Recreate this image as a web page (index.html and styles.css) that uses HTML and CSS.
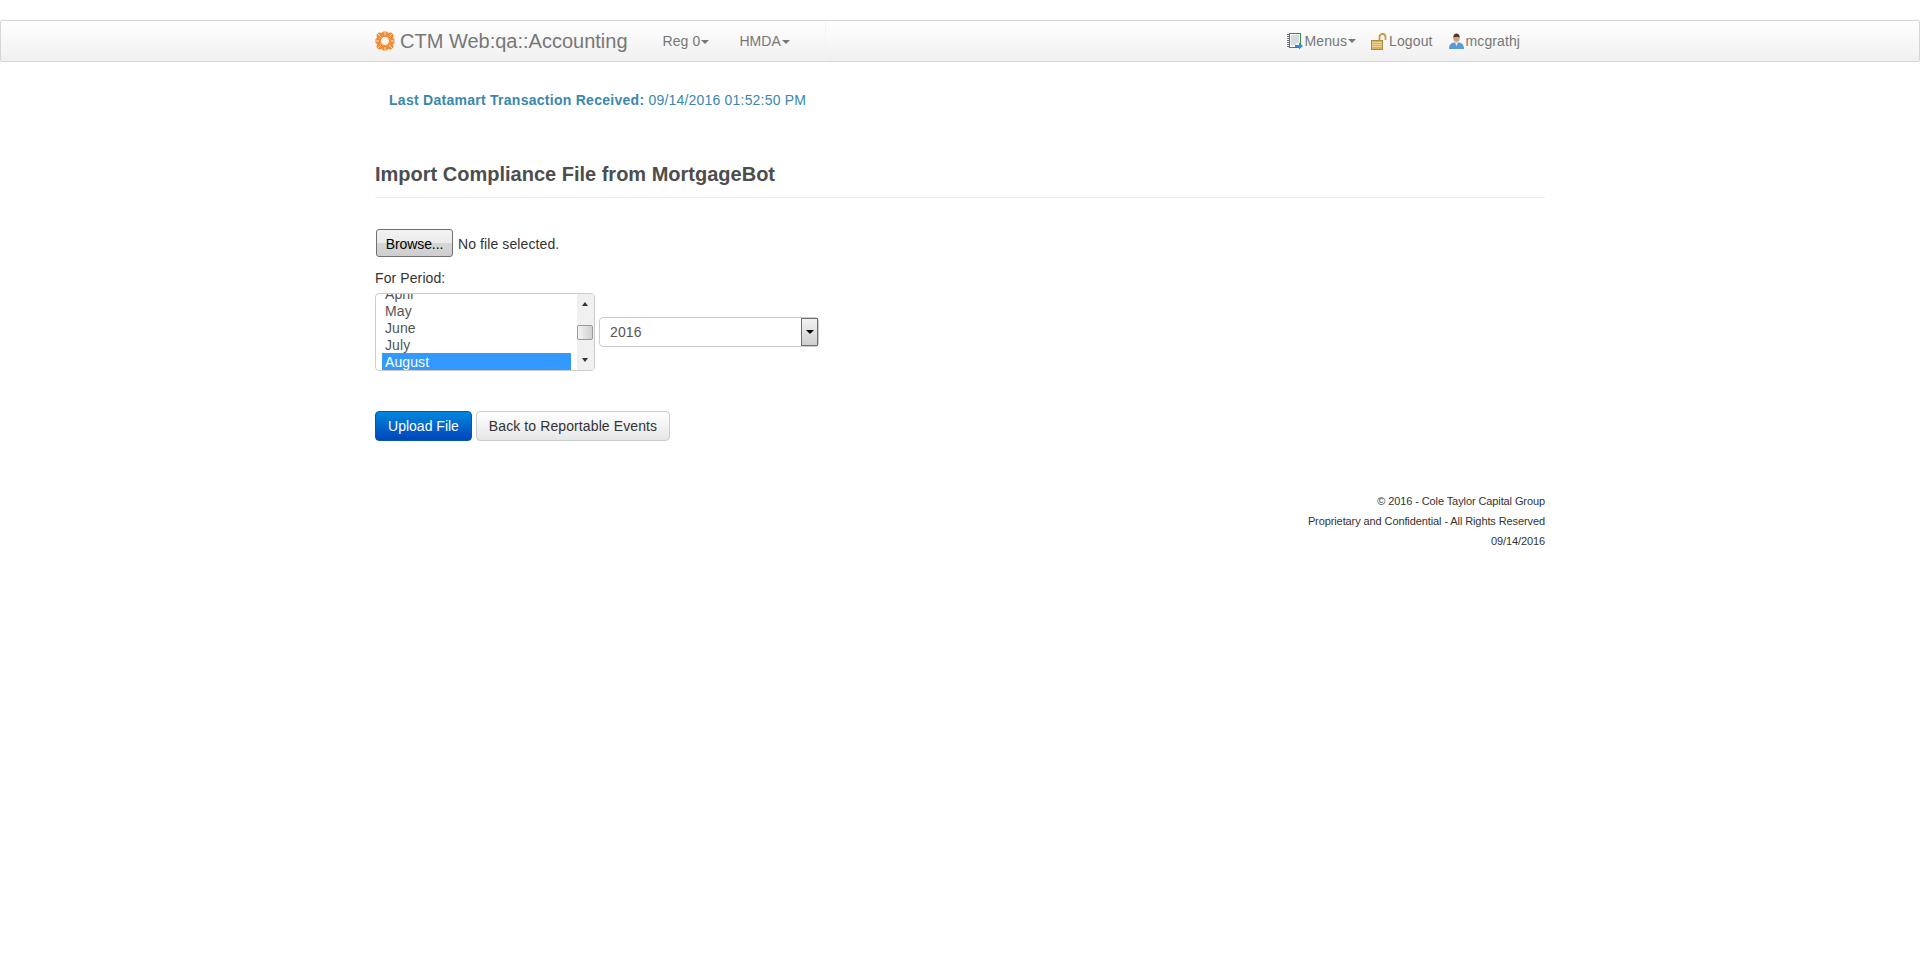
FILE: index.html
```html
<!DOCTYPE html>
<html>
  <head>
    <title>CTM Web:qa::Accounting</title>
    <link rel="stylesheet" href="styles.css">
  </head>
  <body>
    <nav class="navbar">
      <div class="nav-inner">
        <a class="brand">
          <svg class="brand-icon" width="20" height="20" viewBox="0 0 20 20">
            <g fill="#f28c38">
              <circle cx="10" cy="3.500" r="3.300"/>
              <circle cx="10" cy="16.500" r="3.300"/>
              <circle cx="3.500" cy="10" r="3.300"/>
              <circle cx="16.500" cy="10" r="3.300"/>
              <circle cx="4.800" cy="4.800" r="3.200"/>
              <circle cx="15.200" cy="4.800" r="3.200"/>
              <circle cx="4.800" cy="15.200" r="3.200"/>
              <circle cx="15.200" cy="15.200" r="3.200"/>
            </g>
            <path d="M10 5.500l4.500 4.500-4.500 4.500-4.500-4.500z" fill="#fff4e8"/>
            <path d="M2 2l4 4M18 2l-4 4M2 18l4-4M18 18l-4-4M10 0v4M10 16v4M0 10h4M16 10h4" stroke="#fcd9b8" stroke-width="1"/>
          </svg>
          CTM Web:qa::Accounting
        </a>
        <ul class="nav-left">
          <li>Reg 0<span class="caret"></span></li>
          <li>HMDA<span class="caret"></span></li>
        </ul>
        <div class="nav-divider"></div>
        <ul class="nav-right">
          <li>
            <svg width="17" height="17" viewBox="0 0 17 17">
              <rect x="2.500" y="0.500" width="11" height="14" fill="#f6f8fa" stroke="#3f8a4a"/>
              <path d="M4 3h8M4 5h8M4 7h8M4 9h8M4 11h5" stroke="#b4bcc6"/>
              <path d="M1 1v13" stroke="#777" stroke-dasharray="1 1" stroke-width="2"/>
              <path d="M8 12h4V9.500l4 3.500-4 3.500V14H8z" fill="#3a8fd8"/>
            </svg>
            Menus<span class="caret"></span>
          </li>
          <li>
            <svg width="17" height="17" viewBox="0 0 17 17">
              <rect x="0.500" y="7.500" width="11" height="9" fill="#dcae58" stroke="#b08a3c"/>
              <path d="M1 9.500h10M1 11.500h10M1 13.500h10" stroke="#f0d392"/>
              <path d="M8.500 7.500V4a3 3 0 0 1 6 0v3" fill="none" stroke="#c79a45" stroke-width="1.800"/>
            </svg>
            Logout
          </li>
          <li>
            <svg width="17" height="17" viewBox="0 0 17 17">
              <path d="M1 16c0-4.500 2-6 5.500-6.500h4c3.500 .5 5.500 2 5.500 6.500z" fill="#5b9bd5"/>
              <path d="M7 9.500L8.500 13 10 9.500z" fill="#eef3f8"/>
              <ellipse cx="8.500" cy="5" rx="3.200" ry="4" fill="#d6a27a"/>
              <path d="M5.300 4.500C5.300 1.800 7 .6 8.500 .6s3.200 1.200 3.200 3.900C10 3.500 7 3.500 5.300 4.500z" fill="#4a3428"/>
            </svg>
            mcgrathj
          </li>
        </ul>
      </div>
    </nav>

    <main class="container">
      <p class="info"><strong>Last Datamart Transaction Received:</strong> 09/14/2016 01:52:50 PM</p>

      <h3 class="page-title">Import Compliance File from MortgageBot</h3>

      <div class="file-row">
        <button class="browse">Browse...</button>
        <span>No file selected.</span>
      </div>

      <div class="period-label">For Period:</div>
      <div class="period-row">
        <div class="listbox">
          <div class="options">
            <div class="option">April</div>
            <div class="option">May</div>
            <div class="option">June</div>
            <div class="option">July</div>
            <div class="option selected">August</div>
          </div>
          <div class="scrollbar">
            <span class="arrow-up"></span>
            <span class="thumb"></span>
            <span class="arrow-down"></span>
          </div>
        </div>
        <div class="select">
          <span>2016</span>
          <span class="select-btn"><span class="select-arrow"></span></span>
        </div>
      </div>

      <div class="actions">
        <button class="btn btn-primary">Upload File</button>
        <button class="btn btn-default">Back to Reportable Events</button>
      </div>

      <footer class="footer">
        <div>&copy; 2016 - Cole Taylor Capital Group</div>
        <div>Proprietary and Confidential - All Rights Reserved</div>
        <div>09/14/2016</div>
      </footer>
    </main>
  </body>
</html>
```

FILE: styles.css
```css
* { box-sizing: border-box; }
body {
  margin: 0;
  padding-top: 20px;
  background: #fff;
  color: #333;
  font-family: "Liberation Sans", Arial, sans-serif;
  font-size: 14px;
  line-height: 20px;
  letter-spacing: .1px;
}

/* navbar */
.navbar {
  height: 42px;
  border: 1px solid #d5d5d5;
  border-radius: 2px;
  background: linear-gradient(to bottom, #fff, #f0f0f0);
}
.nav-inner {
  width: 1170px;
  height: 40px;
  margin-left: 374px;
  display: flex;
  align-items: center;
  color: #777;
}
.brand {
  display: flex;
  align-items: center;
  gap: 5px;
  font-size: 20px;
  letter-spacing: 0;
  color: #777;
  white-space: nowrap;
}
.brand-icon { flex: none; }
.nav-left, .nav-right {
  display: flex;
  list-style: none;
  margin: 0;
  padding: 0;
}
.nav-left { margin-left: 35px; gap: 30px; }
.nav-divider {
  width: 1px;
  height: 40px;
  margin-left: 35px;
  background: #f4f4f4;
}
.nav-right { margin-left: auto; margin-right: 25px; gap: 15px; }
.nav-right li { display: flex; align-items: center; }
.nav-right svg { margin-right: 1px; }
.caret {
  display: inline-block;
  width: 0;
  height: 0;
  margin-left: 1px;
  vertical-align: middle;
  border-top: 4px solid #777;
  border-left: 4px solid transparent;
  border-right: 4px solid transparent;
}

/* content */
.container {
  width: 1170px;
  margin-left: 375px;
}
.info {
  margin: 28px 0 0;
  padding-left: 14px;
  color: #3a87ad;
  letter-spacing: .2px;
}
.info strong { letter-spacing: .27px; }
.page-title {
  margin: 52px 0 0;
  padding-bottom: 11px;
  border-bottom: 1px solid #eee;
  color: #4d4d4d;
  font-size: 20px;
  line-height: 24px;
  letter-spacing: 0;
}
.file-row {
  display: flex;
  align-items: center;
  gap: 5px;
  margin-top: 31px;
  padding-left: 1px;
}
.file-row span { padding-top: 1px; }
.browse {
  width: 77px;
  height: 28px;
  padding: 1px 0 0;
  border: 1px solid #707070;
  border-radius: 3px;
  background: linear-gradient(to bottom, #f2f2f2, #ebebeb 50%, #d6d6d6 51%, #cfcfcf);
  color: #000;
  font: 14px "Liberation Sans", Arial, sans-serif;
  letter-spacing: -.1px;
}
.period-label { margin-top: 11px; }
.period-row {
  display: flex;
  align-items: center;
  gap: 4px;
  margin-top: 5px;
}

/* fake multi-row select */
.listbox {
  display: flex;
  width: 220px;
  height: 78px;
  border: 1px solid #ccc;
  border-radius: 4px;
  overflow: hidden;
}
.options {
  flex: 1;
  margin-top: -9px;
  padding-left: 6px;
  padding-right: 6px;
  color: #555;
}
.option {
  height: 17px;
  padding: 1px 0 0 3px;
  line-height: 17px;
}
.option.selected { background: #3399ff; color: #fff; }
.scrollbar {
  position: relative;
  width: 17px;
  background: #f0f0f0;
}
.thumb {
  position: absolute;
  left: 0;
  top: 31px;
  width: 16px;
  height: 15px;
  border: 1px solid #999;
  border-radius: 2px;
  background: linear-gradient(to right, #f4f4f4, #d0d0d0);
}
.arrow-up, .arrow-down {
  position: absolute;
  left: 5px;
  width: 0;
  height: 0;
  border-left: 3px solid transparent;
  border-right: 3px solid transparent;
}
.arrow-up { top: 8px; border-bottom: 4px solid #333; }
.arrow-down { bottom: 8px; border-top: 4px solid #333; }

.select {
  display: flex;
  align-items: center;
  justify-content: space-between;
  width: 220px;
  height: 30px;
  padding-left: 10px;
  border: 1px solid #ccc;
  border-radius: 4px;
  color: #555;
}
.select-btn {
  display: flex;
  align-items: center;
  justify-content: center;
  width: 17px;
  height: 28px;
  border: 1px solid #707070;
  background: linear-gradient(to bottom, #f2f2f2, #cfcfcf);
}
.select-arrow {
  width: 0;
  height: 0;
  border-left: 4px solid transparent;
  border-right: 4px solid transparent;
  border-top: 4px solid #000;
}

/* buttons */
.actions {
  display: flex;
  gap: 4px;
  margin-top: 40px;
}
.btn {
  height: 30px;
  padding: 0;
  border-radius: 4px;
  font: 14px "Liberation Sans", Arial, sans-serif;
  white-space: nowrap;
}
.btn-primary {
  width: 97px;
  border: 1px solid #0058b0;
  background: linear-gradient(to bottom, #0088dd, #0044bb);
  color: #fff;
}
.btn-default {
  width: 194px;
  border: 1px solid #ccc;
  background: linear-gradient(to bottom, #fff, #e6e6e6);
  color: #333;
  letter-spacing: .1px;
}

.footer {
  margin-top: 50px;
  text-align: right;
  font-size: 11px;
  letter-spacing: -.1px;
  color: #333;
}
```
